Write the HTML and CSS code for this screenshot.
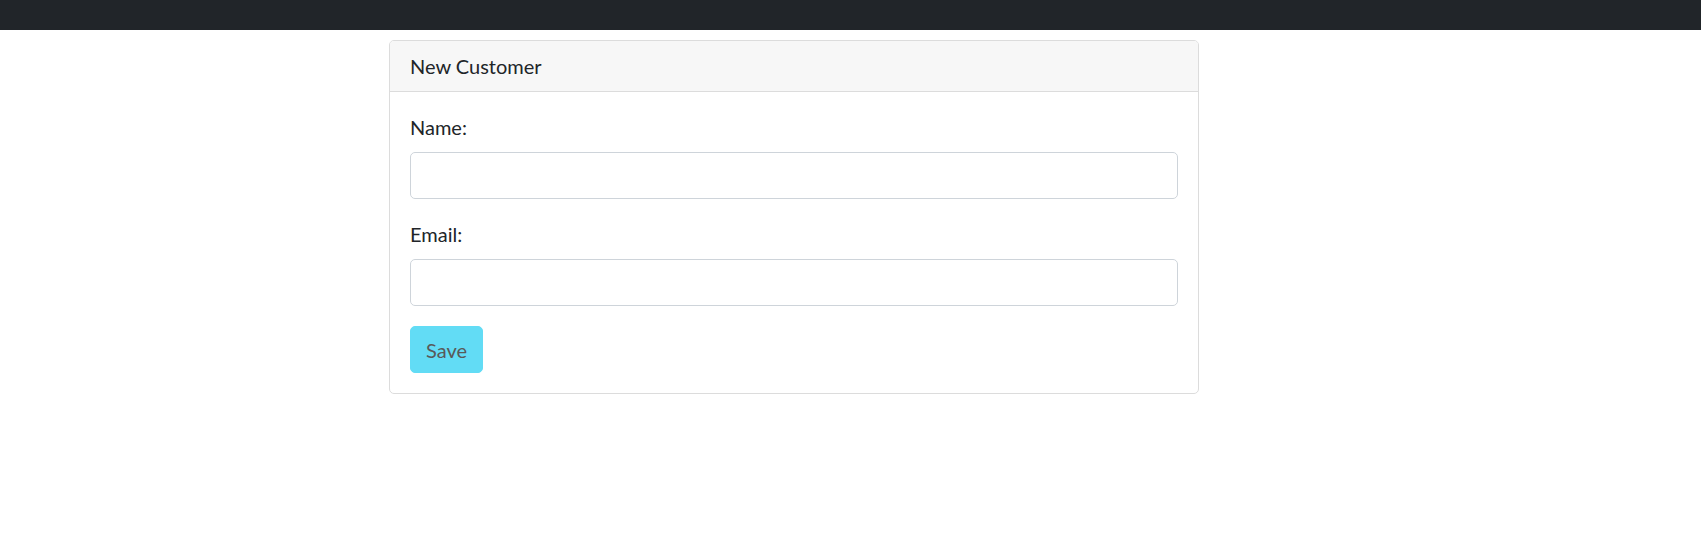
FILE: index.html
```html
<!DOCTYPE html>
<html lang="en">
<head>
<meta charset="utf-8">
<title>New Customer</title>
<link rel="stylesheet" href="styles.css">
</head>
<body>
<nav class="navbar"></nav>
<main class="page">
  <section class="card">
    <header class="card-header">New Customer</header>
    <form class="card-body">
      <div class="group">
        <label class="label" for="name">Name:</label>
        <input class="input" id="name" type="text">
      </div>
      <div class="group">
        <label class="label" for="email">Email:</label>
        <input class="input" id="email" type="email">
      </div>
      <button class="btn" type="button" disabled>Save</button>
    </form>
  </section>
</main>
</body>
</html>
```
FILE: styles.css
```css
* { box-sizing: border-box; }
html, body { margin: 0; padding: 0; background: #fff; }
body {
  font-family: Lato, "Noto Sans", "Liberation Sans", sans-serif;
  font-size: 20px;
  line-height: 30px;
  color: #212529;
}
.navbar {
  height: 30px;
  background: #212529;
}
.page {
  display: flex;
  padding: 10px 0 0 389px;
}
.card {
  width: 810px;
  border: 1px solid #dcdcdc;
  border-radius: 5px;
  overflow: hidden;
}
.card-header {
  background: #f7f7f7;
  border-bottom: 1px solid #dcdcdc;
  padding: 10px 20px;
  line-height: 30px;
}
.card-body {
  display: flex;
  flex-direction: column;
  align-items: flex-start;
  padding: 20px;
  margin: 0;
}
.group {
  width: 100%;
  margin-bottom: 20px;
  display: flex;
  flex-direction: column;
}
.label {
  display: block;
  margin-bottom: 10px;
  line-height: 30px;
}
.input {
  display: block;
  width: 100%;
  height: 47px;
  border: 1px solid #ced4da;
  border-radius: 5px;
  background: #fff;
  font: inherit;
  padding: 7px 15px;
}
.btn {
  font: inherit;
  line-height: 30px;
  height: 47px;
  padding: 7px 15px;
  border: 1px solid #62dcf5;
  border-radius: 5px;
  background: #62dcf5;
  color: #595959;
}
```
